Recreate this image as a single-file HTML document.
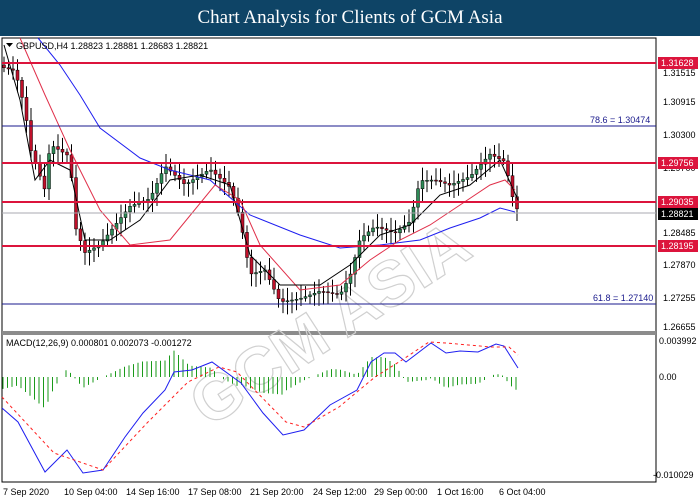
<!DOCTYPE html>
<html><head><meta charset="utf-8">
<style>
body{margin:0;width:700px;height:500px;background:#fff;overflow:hidden;font-family:"Liberation Sans",sans-serif}
#t{position:absolute;left:0;top:0;width:700px;height:36px;background:#0e4466;color:#fff;font-family:"Liberation Serif",serif;font-size:19px;text-align:center;line-height:36px}
svg{position:absolute;left:0;top:0}
text{font-family:"Liberation Sans",sans-serif;font-size:9px}
</style></head><body>
<div id="t">Chart Analysis for Clients of GCM Asia</div>
<svg id="s" width="700" height="500" xmlns="http://www.w3.org/2000/svg">
<rect x="2" y="38" width="654" height="444" fill="#fff" stroke="#000"/>
<rect x="2" y="331" width="654" height="4" fill="#8c8c8c"/>
<text x="120" y="330" fill="none" stroke="#d0d0d0" stroke-width="1.2" transform="rotate(-33 330 230)" style="font-size:64px;font-weight:bold">GCM ASIA</text>
<g id="g"></g>
<text x="16" y="49" fill="#000">GBPUSD,H4  1.28823 1.28881 1.28683 1.28821</text>
<path d="M6 43h7l-3.5 4z" fill="#000"/>
<text x="6" y="346" fill="#000">MACD(12,26,9) 0.000801 0.002073 -0.001272</text>
<line x1="2" y1="63" x2="656" y2="63" stroke="#dc143c" stroke-width="2"/>
<line x1="2" y1="163" x2="656" y2="163" stroke="#dc143c" stroke-width="2"/>
<line x1="2" y1="202" x2="656" y2="202" stroke="#dc143c" stroke-width="2"/>
<line x1="2" y1="246" x2="656" y2="246" stroke="#dc143c" stroke-width="2"/>
<line x1="2" y1="213" x2="656" y2="213" stroke="#a9a9b0" stroke-width="1"/>
<line x1="2" y1="126" x2="656" y2="126" stroke="#1a1a8c" stroke-width="1"/>
<line x1="2" y1="304" x2="656" y2="304" stroke="#1a1a8c" stroke-width="1"/>
<text x="590" y="123" fill="#1a1a8c">78.6  = 1.30474</text>
<text x="593" y="301" fill="#1a1a8c">61.8 = 1.27140</text>
<g fill="#000">
<text x="663" y="76">1.31515</text><text x="663" y="105">1.30915</text><text x="663" y="138">1.30300</text>
<text x="663" y="171">1.29700</text><text x="663" y="236">1.28485</text><text x="663" y="268">1.27870</text>
<text x="663" y="301">1.27255</text><text x="663" y="330">1.26655</text>
<text x="659" y="344">0.003992</text><text x="659" y="380">0.00</text><text x="653" y="478">-0.010029</text>
</g>
<rect x="658" y="57" width="40" height="12" fill="#dc143c"/><text x="661" y="66" fill="#fff">1.31628</text>
<rect x="658" y="157" width="40" height="12" fill="#dc143c"/><text x="661" y="166" fill="#fff">1.29756</text>
<rect x="658" y="196" width="40" height="12" fill="#dc143c"/><text x="661" y="205" fill="#fff">1.29035</text>
<rect x="658" y="208" width="40" height="12" fill="#000"/><text x="661" y="217" fill="#fff">1.28821</text>
<rect x="658" y="240" width="40" height="12" fill="#dc143c"/><text x="661" y="249" fill="#fff">1.28195</text>
<g fill="#000">
<text x="3" y="495">7 Sep 2020</text><text x="64" y="495">10 Sep 04:00</text><text x="126" y="495">14 Sep 16:00</text>
<text x="188" y="495">17 Sep 08:00</text><text x="250" y="495">21 Sep 20:00</text><text x="313" y="495">24 Sep 12:00</text>
<text x="374" y="495">29 Sep 00:00</text><text x="437" y="495">1 Oct 16:00</text><text x="499" y="495">6 Oct 04:00</text>
</g>
</svg>
<script>
var g=document.getElementById('g'),h='';
function lerp(p,x){for(var i=0;i<p.length-1;i++){if(x>=p[i][0]&&x<=p[i+1][0]){var t=(x-p[i][0])/(p[i+1][0]-p[i][0]);return p[i][1]+t*(p[i+1][1]-p[i][1]);}}return p[p.length-1][1];}
function pl(p,c,w,d){h+='<polyline fill="none" stroke="'+c+'" stroke-width="'+w+'" '+(d?'stroke-dasharray="3,3" ':'')+'points="'+p.map(function(a){return a.join(',')}).join(' ')+'"/>';}
var P=[[4,65],[15,70],[25,110],[30,150],[45,195],[50,150],[70,165],[75,235],[85,262],[100,255],[115,235],[130,215],[150,205],[165,170],[185,185],[210,165],[230,180],[240,210],[250,265],[265,260],[280,292],[300,290],[320,285],[340,292],[350,275],[360,240],[375,230],[395,240],[410,230],[420,190],[435,190],[450,195],[470,185],[490,160],[505,165],[515,210]];
var prev=65,s=7;
for(var x=4;x<=518;x+=4.5){var c=lerp(P,x)+Math.sin(x*s)*10;var o=prev;var hi=Math.min(o,c)-3-Math.abs(Math.sin(x*3))*10,lo=Math.max(o,c)+3+Math.abs(Math.cos(x*2))*10;
var col=c<o?'#2e8b57':'#c0102a';h+='<line x1="'+x+'" y1="'+hi+'" x2="'+x+'" y2="'+lo+'" stroke="#000"/>';
h+='<rect x="'+(x-1.5)+'" y="'+Math.min(o,c)+'" width="3" height="'+Math.max(1,Math.abs(o-c))+'" fill="'+col+'" stroke="#000" stroke-width=".5"/>';prev=c;}
pl([[38,38],[60,65],[80,95],[100,128],[140,158],[170,170],[210,180],[250,215],[300,235],[340,248],[380,245],[420,240],[450,228],[480,218],[500,208],[515,212]],'#1e1ef0',1);
pl([[20,38],[45,95],[70,150],[100,210],[130,245],[170,240],[215,185],[240,200],[260,245],[300,290],[340,285],[370,260],[400,240],[430,225],[460,205],[490,185],[505,180],[515,190]],'#e0304a',1);
pl([[4,45],[20,100],[35,180],[50,160],[70,170],[85,240],[110,240],[140,220],[170,180],[200,175],[230,185],[250,255],[280,285],[320,285],[350,265],[380,235],[410,225],[440,195],[470,185],[500,160],[518,200]],'#000',1);
var B=[[2,408],[18,422],[45,472],[67,450],[83,473],[103,470],[125,437],[143,413],[165,390],[174,372],[192,370],[212,362],[241,383],[263,413],[283,435],[304,430],[330,405],[357,390],[371,362],[384,353],[395,353],[406,362],[431,343],[446,353],[460,351],[478,352],[496,344],[504,346],[518,368]];
var R=[[2,397],[54,453],[103,470],[147,423],[188,382],[219,367],[237,372],[286,422],[304,427],[339,407],[375,377],[402,360],[429,342],[446,343],[491,347],[509,347],[518,355]];
for(var x=3;x<=518;x+=4.5){var d=(lerp(R,x)-lerp(B,x))*1.1;if(Math.abs(d)<1)continue;h+='<line x1="'+x+'" y1="377" x2="'+x+'" y2="'+(377-d)+'" stroke="#1a9a1a"/>';}
pl(B,'#1e1ef0',1);
pl(R,'#ff2020',1,true);
g.innerHTML=h;
</script>
</body></html>
